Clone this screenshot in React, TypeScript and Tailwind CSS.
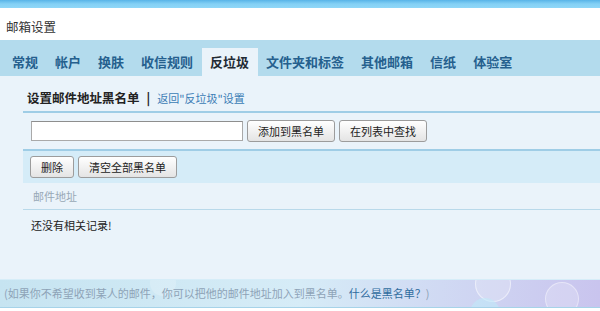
const tabs = ["常规", "帐户", "换肤", "收信规则", "反垃圾", "文件夹和标签", "其他邮箱", "信纸", "体验室"];
const activeTab = "反垃圾";

function Btn({ children }: { children: React.ReactNode }) {
  return (
    <button
      type="button"
      className="flex h-[22px] items-center rounded-[3px] border border-[#9c9c9c] bg-gradient-to-b from-white to-[#e4e4e4] px-[10px] text-[11px] leading-none text-[#222]"
    >
      {children}
    </button>
  );
}

export default function App() {
  return (
    <div className="flex h-[311px] w-[600px] flex-col overflow-hidden bg-white font-['Noto_Sans_CJK_SC','Noto_Sans',sans-serif]">
      <div className="h-[8px] bg-gradient-to-b from-[#58b4e8] via-[#84d1f5] to-[#8fd7f8]" />

      <div className="flex h-[32px] items-center pl-[6px] pt-[7px] text-[12.5px] text-[#333]">邮箱设置</div>

      <div className="flex h-[36px] items-end bg-[#b3dbed] pl-[3.5px]">
        {tabs.map((t) => (
          <div
            key={t}
            className={
              t === activeTab
                ? "flex h-[28px] items-center bg-[#eaf3fa] px-[8.5px] text-[13px] font-bold text-[#1f2a33]"
                : "flex h-[28px] items-center px-[8.5px] text-[13px] font-bold text-[#25608e]"
            }
          >
            {t}
          </div>
        ))}
      </div>

      <div className="flex h-[203px] flex-col bg-[#eaf3fa] pl-[23px]">
        <div className="flex h-[37px] items-start border-b-2 border-[#9fcde6] pl-[4px] pt-[14px]">
          <span className="text-[12.5px] font-bold leading-[16px] text-[#222]">设置邮件地址黑名单</span>
          <span className="mx-[7px] text-[12.5px] font-bold leading-[16px] text-[#222]">|</span>
          <span className="text-[11px] leading-[16px] text-[#3b7cb5]">返回"反垃圾"设置</span>
        </div>

        <div className="flex h-[38px] items-center gap-[4px] border-b-2 border-[#9fcde6] pl-[8px]">
          <input
            type="text"
            className="h-[20px] w-[212px] border border-[#a9a9a9] border-t-[#8e8e8e] bg-white outline-none"
          />
          <Btn>添加到黑名单</Btn>
          <Btn>在列表中查找</Btn>
        </div>

        <div className="flex h-[32px] items-center gap-[4px] bg-[#d5ecf8] pl-[7px]">
          <Btn>删除</Btn>
          <Btn>清空全部黑名单</Btn>
        </div>

        <div className="flex h-[27px] items-center border-b border-[#b9d9ea] pl-[10px] text-[11px] text-[#98a8b6]">
          邮件地址
        </div>

        <div className="pl-[8px] pt-[7px] text-[11px] leading-[16px] text-[#222]">还没有相关记录!</div>
      </div>

      <div className="relative flex h-[29px] items-center overflow-hidden border-t border-b border-t-[#d6edf8] border-b-[#a6d3e9] bg-gradient-to-r from-[#c6e4f1] via-[#d6ecf7] to-[#c9c4ee] pl-[4px] text-[11px] text-[#8ea3b7]">
        <div className="absolute left-[475px] top-[-14px] h-[36px] w-[36px] rounded-full border border-white/50 bg-white/20" />
        <div className="absolute left-[545px] top-[2px] h-[34px] w-[34px] rounded-full border border-white/40 bg-white/20" />
        <div className="absolute left-[470px] top-[18px] h-[30px] w-[30px] rounded-full bg-[#bfeaf8]/60" />
        <div className="absolute left-[150px] top-[-10px] h-[26px] w-[26px] rounded-full bg-white/20" />
        <span className="relative">
          (如果你不希望收到某人的邮件，你可以把他的邮件地址加入到黑名单。
          <span className="text-[#2f6c9e]">什么是黑名单？</span>)
        </span>
      </div>
    </div>
  );
}
